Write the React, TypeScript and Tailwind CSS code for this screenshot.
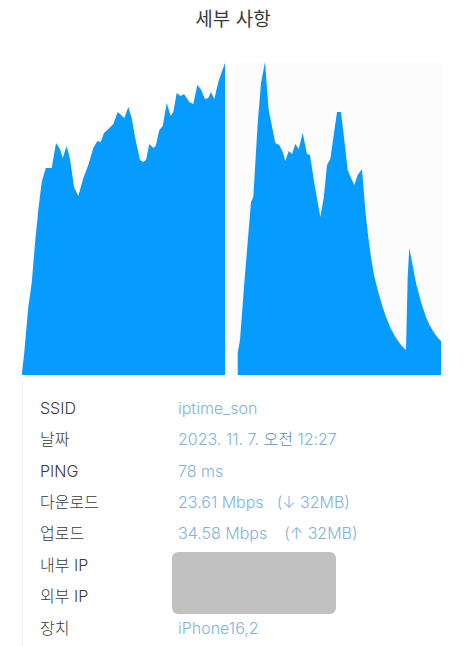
import React from "react";

const leftPts: [number, number][] = [
  [21.7, 375], [24, 355], [28.3, 307], [31.7, 283], [35, 243], [38.3, 210], [41.7, 182], [45.7, 168], [51.7, 168],
  [56, 143], [60, 149], [62.7, 158], [66.7, 146], [70, 159], [74, 187], [78.3, 196], [83.3, 178], [88.3, 165],
  [93.3, 148], [97.3, 141], [100.7, 142], [104, 133], [108.3, 129], [113.3, 124], [117.7, 112], [124.3, 118],
  [128.3, 107], [131.7, 118], [135, 137], [140, 160], [143.3, 162], [146, 160], [149.3, 144], [153.3, 148],
  [155.7, 146], [159.3, 130], [162.7, 126], [166.7, 103], [170.7, 116], [173.3, 112], [176.7, 93], [180.7, 96],
  [184, 94], [189.3, 102], [193.3, 104], [197.3, 85], [200.7, 89], [205, 99], [208.3, 98], [211, 92], [214.3, 99],
  [218.3, 82], [221.7, 72], [225, 63], [225, 375],
];

const rightPts: [number, number][] = [
  [237.7, 375], [237.7, 353], [240, 340], [244.3, 283], [251, 202], [253.3, 197], [257.7, 123], [261, 83], [265, 62],
  [268.7, 110], [275.3, 143], [279.3, 145], [282.7, 152], [285.3, 161], [288.7, 151], [292, 154], [295.3, 144],
  [298.7, 149], [302.7, 133], [307, 154], [310, 155], [314.3, 183], [320.3, 217], [323.7, 198], [327, 165],
  [330.3, 159], [337, 112], [341, 112], [344.3, 140], [347.7, 170], [351, 178], [354.3, 185], [357.7, 175],
  [362, 169], [365.3, 210], [368, 235], [371, 257], [374, 275], [377.7, 290], [382, 305], [386, 317], [391, 329],
  [396, 338], [401, 345], [406, 350], [407.7, 277], [409.3, 248], [412, 262], [416, 283], [421, 302], [426, 317],
  [430, 326], [434.3, 333], [438, 338], [441, 341], [441, 375],
];

const toPath = (pts: [number, number][]) =>
  "M" + pts.map(([x, y]) => `${x} ${y}`).join(" L") + " Z";

const rows: { label: string; value: React.ReactNode }[] = [
  { label: "SSID", value: "iptime_son" },
  {
    label: "날짜",
    value: (
      <>
        2023. 11. 7. <span className="text-[#4f8fcb]">오전</span> 12:27
      </>
    ),
  },
  { label: "PING", value: "78 ms" },
  {
    label: "다운로드",
    value: (
      <>
        23.61 Mbps<span className="ml-[13px]">(↓ 32MB)</span>
      </>
    ),
  },
  {
    label: "업로드",
    value: (
      <>
        34.58 Mbps<span className="ml-[17px]">(↑ 32MB)</span>
      </>
    ),
  },
  { label: "내부 IP", value: "" },
  { label: "외부 IP", value: "" },
  { label: "장치", value: "iPhone16,2" },
];

export default function App() {
  return (
    <div
      className="w-[466px] h-[646px] bg-white overflow-hidden"
      style={{ fontFamily: 'Inter, "Noto Sans CJK KR", sans-serif' }}
    >
      <div className="h-[40px] flex items-center justify-center text-[19px] text-[#3a3a3a] font-normal">
        세부 사항
      </div>
      <div className="flex pl-[22px] mt-[22px] h-[313px]">
        <svg width="204" height="313" viewBox="22 62 204 313" className="block">
          <path d={toPath(leftPts)} fill="#069bfe" />
        </svg>
        <div className="ml-[11px] w-[206px] h-[313px] bg-[#fcfcfc]">
          <svg width="206" height="313" viewBox="237 62 206 313" className="block">
            <path d={toPath(rightPts)} fill="#069bfe" />
          </svg>
        </div>
      </div>
      <div className="relative ml-[22px] mt-[5px] border-l border-[#efefef] pt-[12px] h-[300px]">
        {rows.map((r) => (
          <div key={r.label} className="flex items-center h-[31.43px] text-[16px]">
            <div className="w-[155px] pl-[17px] text-[#3a3a3a] font-light">{r.label}</div>
            <div className="text-[#80b4dc] font-light">{r.value}</div>
          </div>
        ))}
        <div className="absolute left-[149px] top-[172px] w-[164px] h-[62px] rounded-[6px] bg-[#c1c1c1]" />
      </div>
    </div>
  );
}
